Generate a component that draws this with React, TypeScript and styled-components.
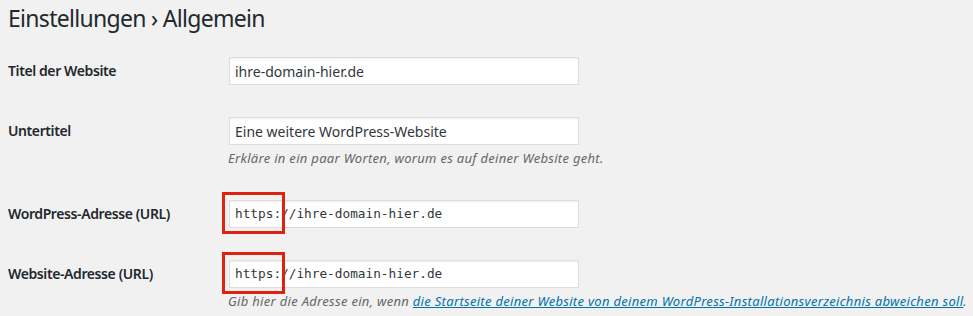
import React from 'react';
import styled, { createGlobalStyle } from 'styled-components';

const GlobalStyle = createGlobalStyle`
  html, body {
    margin: 0;
    padding: 0;
    background: #f1f1f1;
  }
  body {
    font-family: "Noto Sans", "Open Sans", sans-serif;
    color: #23282d;
    font-size: 13px;
  }
`;

const Wrap = styled.div`
  padding: 3px 0 0 8px;
  width: 965px;
`;

const Heading = styled.h1`
  margin: 0;
  font-size: 23px;
  font-weight: 400;
  line-height: 30px;
  letter-spacing: -0.7px;
  color: #23282d;
`;

const FormTable = styled.div`
  margin-top: 8px;
  display: flex;
  flex-direction: column;
`;

const Row = styled.div`
  display: grid;
  grid-template-columns: 210px 1fr;
`;

const Label = styled.label`
  padding: 21px 10px 19px 0;
  font-size: 14px;
  font-weight: 600;
  line-height: 18px;
  letter-spacing: -0.4px;
`;

const Field = styled.div`
  padding: 15px 10px;
`;

const InputBox = styled.div`
  position: relative;
  width: 350px;
  margin: 1px;
`;

const Input = styled.input<{ $mono?: boolean }>`
  box-sizing: border-box;
  display: block;
  width: 350px;
  height: 28px;
  padding: 3px 5px;
  border: 1px solid #ddd;
  background: #fff;
  box-shadow: inset 0 1px 2px rgba(0, 0, 0, 0.07);
  color: #32373c;
  outline: none;
  font-family: ${p => (p.$mono ? '"DejaVu Sans Mono", "Liberation Mono", monospace' : '"Noto Sans", "Open Sans", sans-serif')};
  font-size: ${p => (p.$mono ? '12.75px' : '14px')};
`;

const Marker = styled.span`
  position: absolute;
  left: -7px;
  top: -8px;
  width: 63px;
  height: 42px;
  box-sizing: border-box;
  border: 3px solid #dd2211;
  pointer-events: none;
`;

const Description = styled.p`
  margin: 4px 0 0;
  font-size: 13px;
  font-style: italic;
  line-height: 19.5px;
  letter-spacing: 0.3px;
  color: #666;
  white-space: nowrap;
`;

const Link = styled.a`
  color: #0073aa;
  text-decoration: underline;
`;

const App = () => {
  return (
    <>
      <GlobalStyle />
      <Wrap>
        <Heading>Einstellungen › Allgemein</Heading>
        <FormTable>
          <Row>
            <Label>Titel der Website</Label>
            <Field>
              <InputBox>
                <Input defaultValue="ihre-domain-hier.de" />
              </InputBox>
            </Field>
          </Row>
          <Row>
            <Label>Untertitel</Label>
            <Field>
              <InputBox>
                <Input defaultValue="Eine weitere WordPress-Website" />
              </InputBox>
              <Description>Erkläre in ein paar Worten, worum es auf deiner Website geht.</Description>
            </Field>
          </Row>
          <Row>
            <Label>WordPress-Adresse (URL)</Label>
            <Field>
              <InputBox>
                <Input $mono defaultValue="https://ihre-domain-hier.de" />
                <Marker />
              </InputBox>
            </Field>
          </Row>
          <Row>
            <Label>Website-Adresse (URL)</Label>
            <Field>
              <InputBox>
                <Input $mono defaultValue="https://ihre-domain-hier.de" />
                <Marker />
              </InputBox>
              <Description>
                Gib hier die Adresse ein, wenn{' '}
                <Link href="#">die Startseite deiner Website von deinem WordPress-Installationsverzeichnis abweichen soll</Link>.
              </Description>
            </Field>
          </Row>
        </FormTable>
      </Wrap>
    </>
  );
};

export default App;
